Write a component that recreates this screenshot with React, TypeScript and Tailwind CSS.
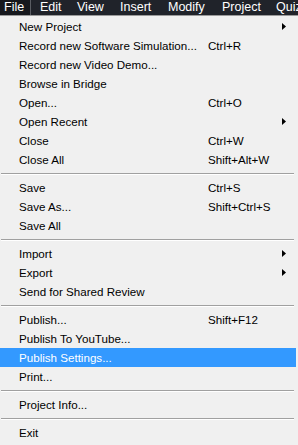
type Item = {
  label: string;
  shortcut?: string;
  submenu?: boolean;
  active?: boolean;
};

const sections: Item[][] = [
  [
    { label: "New Project", submenu: true },
    { label: "Record new Software Simulation...", shortcut: "Ctrl+R" },
    { label: "Record new Video Demo..." },
    { label: "Browse in Bridge" },
    { label: "Open...", shortcut: "Ctrl+O" },
    { label: "Open Recent", submenu: true },
    { label: "Close", shortcut: "Ctrl+W" },
    { label: "Close All", shortcut: "Shift+Alt+W" },
  ],
  [
    { label: "Save", shortcut: "Ctrl+S" },
    { label: "Save As...", shortcut: "Shift+Ctrl+S" },
    { label: "Save All" },
  ],
  [
    { label: "Import", submenu: true },
    { label: "Export", submenu: true },
    { label: "Send for Shared Review" },
  ],
  [
    { label: "Publish...", shortcut: "Shift+F12" },
    { label: "Publish To YouTube..." },
    { label: "Publish Settings...", active: true },
    { label: "Print..." },
  ],
  [{ label: "Project Info..." }],
  [{ label: "Exit" }],
];

// top bar entries with their slot widths
const menus: [string, string][] = [
  ["Edit", "w-[37px]"],
  ["View", "w-[43px]"],
  ["Insert", "w-[48px]"],
  ["Modify", "w-[54px]"],
  ["Project", "w-[54px]"],
  ["Quiz", "w-[30px]"],
];

const MenuRow = ({ item }: { item: Item }) => (
  <div
    className={`flex h-[19px] items-center pl-[19px] pr-[10px] mr-[2px] ${
      item.active ? "bg-[#3399ff] text-white" : "text-black"
    }`}
  >
    <span className="w-[189px] whitespace-nowrap">{item.label}</span>
    <span className="flex-1 whitespace-nowrap">{item.shortcut}</span>
    {item.submenu && (
      <svg width="4" height="7" viewBox="0 0 4 7">
        <path d="M0 0 L4 3.5 L0 7 Z" fill="#000" />
      </svg>
    )}
  </div>
);

export default function App() {
  return (
    <div
      className="w-[298px] h-[445px] overflow-hidden bg-[#f0f0f0] text-[11.6px]"
      style={{ fontFamily: '"Liberation Sans", Arial, sans-serif' }}
    >
      <div className="flex h-[15px] items-center bg-[#20232a] text-white text-[12.5px] border-b border-[#9a9a9a] box-content overflow-hidden">
        <div className="flex h-full w-[31px] shrink-0 items-center border-r border-[#5a5d63] bg-[#16181d] pl-[4px]">
          File
        </div>
        <div className="flex pl-[9px] whitespace-nowrap">
          {menus.map(([m, w]) => (
            <span key={m} className={`${w} shrink-0`}>
              {m}
            </span>
          ))}
        </div>
      </div>
      <div className="pt-[1px]">
        {sections.map((sec, i) => (
          <div key={i}>
            {i > 0 && (
              <div className="flex h-[9px] items-center pl-[1px] pr-[4px]">
                <div className="h-[2px] w-full border-t border-[#a0a0a0] border-b border-b-white" />
              </div>
            )}
            {sec.map((item) => (
              <MenuRow key={item.label} item={item} />
            ))}
          </div>
        ))}
      </div>
    </div>
  );
}
